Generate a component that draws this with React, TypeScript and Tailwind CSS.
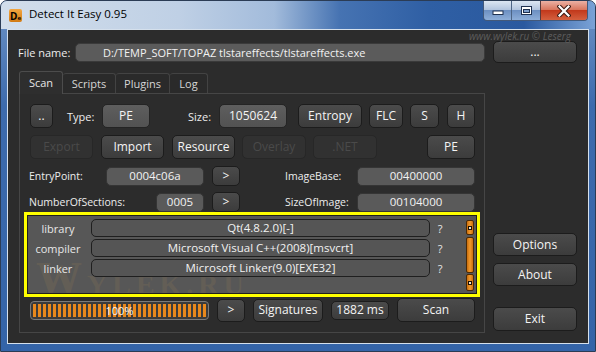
import React from 'react';

type BoxProps = {
  children?: React.ReactNode;
  className?: string;
  variant?: 'normal' | 'value' | 'disabled';
};

const Btn: React.FC<BoxProps> = ({ children, className = '', variant = 'normal' }) => {
  const look =
    variant === 'disabled'
      ? 'border-[#272727] bg-[#313131] text-[#4a4a4a]'
      : variant === 'value'
        ? 'border-[#242424] bg-[linear-gradient(#5e5e5e,#525252)] text-[#f4f4f4]'
        : 'border-[#1c1c1c] bg-[linear-gradient(#4b4b4b,#3c3c3c)] text-[#f4f4f4]';
  return (
    <div
      className={`flex shrink-0 items-center justify-center rounded-[5px] border text-[12px] leading-none ${look} ${className}`}
    >
      {children}
    </div>
  );
};

const Field: React.FC<BoxProps> = ({ children, className = '' }) => (
  <div
    className={`flex shrink-0 items-center justify-center rounded-[5px] border border-[#353535] bg-[#5a5a5a] text-[11.5px] leading-none text-[#f2f2f2] ${className}`}
  >
    {children}
  </div>
);

const Label: React.FC<BoxProps> = ({ children, className = '' }) => (
  <div className={`shrink-0 text-[10.5px] leading-none text-[#ececec] ${className}`}>{children}</div>
);

const tabs = [
  { name: 'Scan', width: 'w-[44px]', active: true },
  { name: 'Scripts', width: 'w-[53px]', active: false },
  { name: 'Plugins', width: 'w-[54px]', active: false },
  { name: 'Log', width: 'w-[38px]', active: false },
];

const detects = [
  { type: 'library', name: 'Qt(4.8.2.0)[-]' },
  { type: 'compiler', name: 'Microsoft Visual C++(2008)[msvcrt]' },
  { type: 'linker', name: 'Microsoft Linker(9.0)[EXE32]' },
];

const ScrollBox: React.FC<{ className?: string }> = ({ className = '' }) => (
  <div
    className={`flex items-center justify-center rounded-[2px] border border-[#4a2a06] bg-[linear-gradient(90deg,#c96e0e,#f39a2c,#c96e0e)] ${className}`}
  >
    <div className="h-[4px] w-[4px] border border-[#1a1006] bg-[#f3e7d2]" />
  </div>
);

const CaptionButtons = () => (
  <div className="flex h-[20px] overflow-hidden rounded-b-[4px] border border-t-0 border-[#43597a]">
    <div className="flex w-[28px] items-center justify-center border-r border-[#4d6585] bg-[linear-gradient(#dce6f2_0%,#b4c6df_45%,#6d90c2_50%,#8eaed8_100%)]">
      <svg width="12" height="10" viewBox="0 0 12 10">
        <rect x="1" y="5" width="10" height="3.5" fill="#ffffff" stroke="#1f3150" strokeWidth="1" />
      </svg>
    </div>
    <div className="flex w-[29px] items-center justify-center border-r border-[#5b3a3a] bg-[linear-gradient(#dce6f2_0%,#b4c6df_45%,#6d90c2_50%,#8eaed8_100%)]">
      <svg width="13" height="11" viewBox="0 0 13 11">
        <rect x="1.5" y="1.5" width="10" height="8" fill="#ffffff" stroke="#1f3150" strokeWidth="1" />
        <rect x="3.5" y="4.5" width="6" height="3" fill="#7f9fcc" stroke="#1f3150" strokeWidth="1" />
      </svg>
    </div>
    <div className="flex w-[46px] items-center justify-center bg-[linear-gradient(#ebb1a4_0%,#d9775f_45%,#c2391c_50%,#d4603f_100%)]">
      <svg width="14" height="12" viewBox="0 0 14 12">
        <path d="M2.5 1.5 L11.5 10.5 M11.5 1.5 L2.5 10.5" stroke="#3a1a14" strokeWidth="4.2" strokeLinecap="square" />
        <path d="M2.5 1.5 L11.5 10.5 M11.5 1.5 L2.5 10.5" stroke="#ffffff" strokeWidth="2.2" strokeLinecap="square" />
      </svg>
    </div>
  </div>
);

export default function App() {
  return (
    <div className="flex h-[352px] w-[596px] flex-col overflow-hidden rounded-t-[7px] border border-[#2b3c55] bg-[linear-gradient(180deg,#6d93c6_0%,#3d6bad_30%,#3464a8_100%)] font-['Open_Sans',sans-serif]">
      {/* title bar */}
      <div className="flex h-[28px] shrink-0 items-start bg-[linear-gradient(90deg,#d2deeb_0%,#bfd0e5_30%,#a2bbdb_46%,#4673b2_57%,#2f5fa4_72%,#2a599f_88%,#7aa2d6_100%)] pl-[8px] pr-[7px]">
        <div className="mt-[8px] flex h-[13px] w-[13px] items-end justify-center rounded-[2px] bg-[linear-gradient(#f2a640,#d27a12)] pb-[1px] text-black">
          <span className="text-[10px] font-bold leading-none">D</span>
          <span className="text-[6px] font-bold leading-none">e</span>
        </div>
        <div className="ml-[7px] mt-[7px] text-[11.5px] leading-none text-black">Detect It Easy 0.95</div>
        <div className="flex-1" />
        <CaptionButtons />
      </div>

      {/* client area */}
      <div className="relative mx-[6px] h-[315px] shrink-0 border border-[#d5e0ec] bg-[#2c2c2c]">
        <div className="absolute right-[17px] top-[1px] text-[10px] italic leading-none text-[#5c5c5c]">
          www.wylek.ru © Leserg
        </div>

        <div className="mt-[11px] flex h-[22px] items-center pl-[10px]">
          <Label className="w-[57px] text-[11px]">File name:</Label>
          <div className="flex h-[19px] w-[410px] items-center rounded-[5px] border border-[#3a3a3a] bg-[#5b5b5b] pl-[27px] text-[11px] leading-none text-[#f2f2f2]">
            D:/TEMP_SOFT/TOPAZ tlstareffects/tlstareffects.exe
          </div>
          <Btn className="ml-[8px] h-[22px] w-[84px]">...</Btn>
        </div>

        <div className="mt-[7px] flex pl-[11px]">
          {/* tab widget */}
          <div className="flex w-[466px] flex-col">
            <div className="flex h-[23px] items-end">
              {tabs.map((t) =>
                t.active ? (
                  <div
                    key={t.name}
                    className={`relative z-10 -mb-px flex h-[23px] items-center justify-center rounded-t-[3px] border border-b-0 border-[#4c4c4c] bg-[#2e2e2e] pb-[1px] text-[11px] leading-none text-[#e6e6e6] ${t.width}`}
                  >
                    {t.name}
                  </div>
                ) : (
                  <div
                    key={t.name}
                    className={`flex h-[20px] items-center justify-center rounded-t-[3px] border border-b-0 border-l-0 border-[#434343] bg-[#2a2a2a] text-[11px] leading-none text-[#d6d6d6] ${t.width}`}
                  >
                    {t.name}
                  </div>
                ),
              )}
            </div>
            <div className="flex h-[240px] flex-col border border-[#464646] pl-[10px] pt-[10px]">
              {/* row 1 */}
              <div className="flex h-[24px] items-center">
                <Btn className="h-[24px] w-[23px]">..</Btn>
                <Label className="ml-[14px] w-[35px] text-[11px]">Type:</Label>
                <Btn variant="value" className="h-[24px] w-[48px]">PE</Btn>
                <Label className="ml-[38px] w-[31px] text-[11px]">Size:</Label>
                <Btn variant="value" className="h-[24px] w-[68px]">1050624</Btn>
                <Btn className="ml-[11px] h-[24px] w-[64px]">Entropy</Btn>
                <Btn className="ml-[7px] h-[24px] w-[34px]">FLC</Btn>
                <Btn className="ml-[7px] h-[24px] w-[29px]">S</Btn>
                <Btn className="ml-[8px] h-[24px] w-[28px]">H</Btn>
              </div>
              {/* row 2 */}
              <div className="mt-[7px] flex h-[24px] items-center">
                <Btn variant="disabled" className="h-[24px] w-[63px]">Export</Btn>
                <Btn className="ml-[8px] h-[24px] w-[63px]">Import</Btn>
                <Btn className="ml-[8px] h-[24px] w-[63px]">Resource</Btn>
                <Btn variant="disabled" className="ml-[7px] h-[24px] w-[64px]">Overlay</Btn>
                <Btn variant="disabled" className="ml-[7px] h-[24px] w-[64px]">.NET</Btn>
                <Btn className="ml-[50px] h-[24px] w-[48px]">PE</Btn>
              </div>
              {/* row 3 */}
              <div className="mt-[7px] flex h-[20px] items-center">
                <Label className="-ml-[1px] w-[77px]">EntryPoint:</Label>
                <Field className="h-[19px] w-[98px]">0004c06a</Field>
                <Btn className="ml-[8px] h-[20px] w-[28px]">&gt;</Btn>
                <Label className="ml-[45px] w-[72px]">ImageBase:</Label>
                <Field className="h-[19px] w-[118px]">00400000</Field>
              </div>
              {/* row 4 */}
              <div className="mt-[6px] flex h-[20px] items-center">
                <Label className="-ml-[1px] w-[127px]">NumberOfSections:</Label>
                <Field className="h-[19px] w-[48px]">0005</Field>
                <Btn className="ml-[8px] h-[20px] w-[28px]">&gt;</Btn>
                <Label className="ml-[45px] w-[72px]">SizeOfImage:</Label>
                <Field className="h-[19px] w-[118px]">00104000</Field>
              </div>
              {/* detections */}
              <div className="-ml-[6px] h-[85px] w-[456px] border-[3px] border-[#ffff00]">
                <div className="relative flex h-full overflow-hidden border border-[#1e1e1e] bg-[#575757] pt-[3px]">
                  <div className="pointer-events-none absolute left-[8px] top-[40px] flex items-baseline font-['Liberation_Serif',serif] font-bold leading-none tracking-[5px] text-[#8a7556] opacity-25 select-none">
                    <span className="text-[46px]">W</span>
                    <span className="text-[28px]">YLEK.RU</span>
                  </div>
                  <div className="relative flex w-[422px] flex-col gap-[2px]">
                    {detects.map((d) => (
                      <div key={d.type} className="flex h-[18px] items-center">
                        <div className="w-[60px] text-center text-[11px] leading-none text-[#e8e8e8]">{d.type}</div>
                        <div className="ml-[3px] flex h-[18px] w-[339px] items-center justify-center rounded-[5px] border border-[#1f1f1f] bg-[#555555] text-[11.5px] leading-none text-[#f2f2f2]">
                          {d.name}
                        </div>
                        <div className="w-[20px] text-center text-[11px] leading-none text-[#e8e8e8]">?</div>
                      </div>
                    ))}
                  </div>
                  <div className="relative ml-[16px] mt-px flex h-[71px] w-[8px] flex-col">
                    <ScrollBox className="h-[15px]" />
                    <div className="mt-[2px] h-[36px] rounded-[2px] border border-[#4a2a06] bg-[linear-gradient(90deg,#c96e0e,#f39a2c,#c96e0e)]" />
                    <ScrollBox className="mt-px h-[17px]" />
                  </div>
                </div>
              </div>
              {/* bottom row */}
              <div className="mt-px flex h-[24px] items-center">
                <div className="relative flex h-[19px] w-[179px] items-center justify-center rounded-[4px] border border-[#7a7a7a] bg-[#3a3a3a] p-[2px]">
                  <div className="h-full w-full bg-[repeating-linear-gradient(90deg,#e8881c_0px,#e8881c_3px,#3c3c3c_3px,#3c3c3c_5px)]" />
                  <span className="absolute inset-0 flex items-center justify-center text-[11px] leading-none text-[#f6f6f6]">
                    100%
                  </span>
                </div>
                <Btn className="ml-[8px] h-[23px] w-[28px]">&gt;</Btn>
                <Btn className="ml-[8px] h-[23px] w-[70px]">Signatures</Btn>
                <Btn className="ml-[8px] h-[19px] w-[58px] text-[10.5px]">1882 ms</Btn>
                <Btn className="ml-[8px] h-[24px] w-[78px]">Scan</Btn>
              </div>
            </div>
          </div>

          {/* right column */}
          <div className="ml-[8px] flex w-[84px] flex-col pt-[163px]">
            <Btn className="h-[23px] w-[84px]">Options</Btn>
            <Btn className="mt-[7px] h-[23px] w-[84px]">About</Btn>
            <Btn className="mt-[21px] h-[24px] w-[84px]">Exit</Btn>
          </div>
        </div>
      </div>
      <div className="flex-1" />
    </div>
  );
}
